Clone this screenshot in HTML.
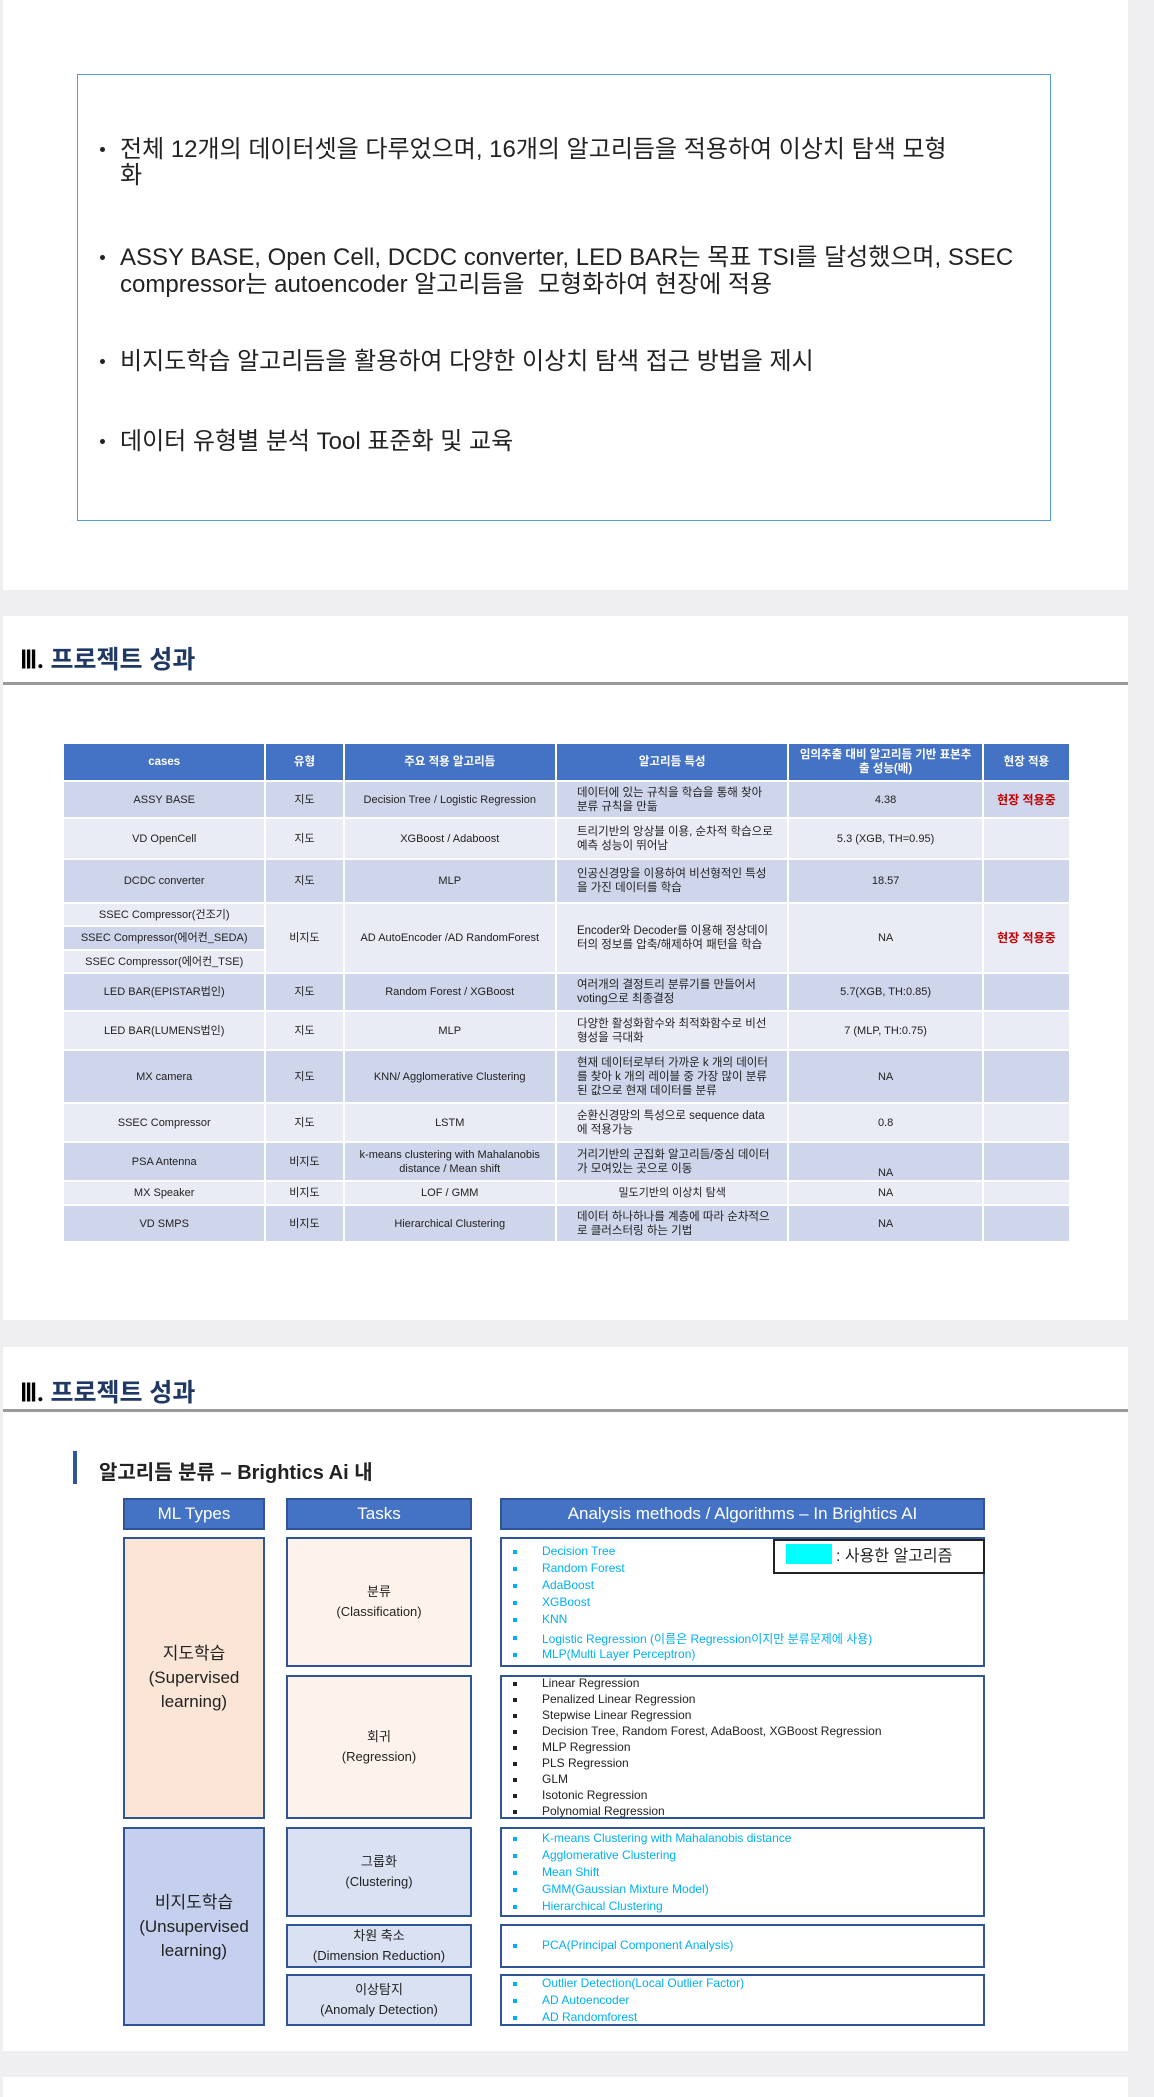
<!DOCTYPE html>
<html><head><meta charset="utf-8"><style>
*{margin:0;padding:0;box-sizing:border-box}
body{width:1154px;height:2085px;background:#efeff2;position:relative;overflow:hidden;font-family:"Liberation Sans","Noto Sans CJK KR",sans-serif;color:#222}
.card{position:absolute;left:3px;width:1125px;background:#fff}
.abs{position:absolute}
.title{position:absolute;left:17px;font-size:25px;font-weight:bold;color:#1F3864;white-space:nowrap}
.title b{color:#000;font-family:"Liberation Serif",serif}
.rule{position:absolute;left:0;width:1125px;height:3px;background:#9a9a9a}
.bl{position:absolute;left:99px;font-size:24px;white-space:nowrap;color:#222;line-height:26px}
table{position:absolute;left:62px;top:742px;border-collapse:separate;border-spacing:2px;table-layout:fixed;width:1009px;font-size:11px;text-align:center}
td,th{padding:0 3px;line-height:14px}
th{background:#4472C4;color:#fff;font-weight:bold;font-size:11.5px;padding:0 8px}
.d{background:#CFD5EA}.l{background:#E9EBF5}
td.t{text-align:left;font-size:11.5px;padding:0 14px 0 20px}
.red{color:#C00000;font-weight:bold;font-size:12px}
.hd{position:absolute;background:#4472C4;border:2px solid #2F5597;color:#fff;font-size:17px;text-align:center;line-height:28px;top:1498px;height:32px}
.bx{position:absolute;border:2px solid #2F5597;text-align:center;display:flex;flex-direction:column;justify-content:center;font-size:13px;line-height:20px}
.li{position:absolute;left:513px;font-size:12px;white-space:nowrap}
.li i{position:absolute;left:0;width:4px;height:4px;background:currentColor;top:6px}
.li s{text-decoration:none;position:absolute;left:29px}
.c{color:#00B0F0}.k{color:#222}
</style></head><body>
<div class="card" style="top:0;height:590px"></div>
<div class="abs" style="left:77px;top:74px;width:974px;height:447px;border:1.5px solid #5B9BD5"></div>
<div class="bl" style="top:137px;left:120px">전체 12개의 데이터셋을 다루었으며, 16개의 알고리듬을 적용하여 이상치 탐색 모형</div>
<div class="bl" style="top:163px;left:120px">화</div>
<div class="abs" style="left:100px;top:147px;width:5px;height:5px;border-radius:50%;background:#222"></div>
<div class="bl" style="top:245px;left:120px">ASSY BASE, Open Cell, DCDC converter, LED BAR는 목표 TSI를 달성했으며, SSEC</div>
<div class="bl" style="top:272px;left:120px">compressor는 autoencoder 알고리듬을 &nbsp;모형화하여 현장에 적용</div>
<div class="abs" style="left:100px;top:255px;width:5px;height:5px;border-radius:50%;background:#222"></div>
<div class="bl" style="top:349px;left:120px">비지도학습 알고리듬을 활용하여 다양한 이상치 탐색 접근 방법을 제시</div>
<div class="abs" style="left:100px;top:359px;width:5px;height:5px;border-radius:50%;background:#222"></div>
<div class="bl" style="top:429px;left:120px">데이터 유형별 분석 Tool 표준화 및 교육</div>
<div class="abs" style="left:100px;top:439px;width:5px;height:5px;border-radius:50%;background:#222"></div>

<div class="card" style="top:616px;height:704px">
<div class="title" style="top:24px"><b>Ⅲ.</b> 프로젝트 성과</div>
<div class="rule" style="top:66px"></div>
</div>
<table>
<colgroup><col style="width:200px"><col style="width:76px"><col style="width:210px"><col style="width:230px"><col style="width:192px"><col style="width:85px"></colgroup>
<tr style="height:36px"><th>cases</th><th>유형</th><th>주요 적용 알고리듬</th><th>알고리듬 특성</th><th>임의추출 대비 알고리듬 기반 표본추출 성능(배)</th><th>현장 적용</th></tr>
<tr style="height:35px" class="d"><td>ASSY BASE</td><td>지도</td><td>Decision Tree / Logistic Regression</td><td class="t">데이터에 있는 규칙을 학습을 통해 찾아 분류 규칙을 만듦</td><td>4.38</td><td class="red">현장 적용중</td></tr>
<tr style="height:39px" class="l"><td>VD OpenCell</td><td>지도</td><td>XGBoost / Adaboost</td><td class="t">트리기반의 앙상블 이용, 순차적 학습으로 예측 성능이 뛰어남</td><td>5.3 (XGB, TH=0.95)</td><td></td></tr>
<tr style="height:42px" class="d"><td>DCDC converter</td><td>지도</td><td>MLP</td><td class="t">인공신경망을 이용하여 비선형적인 특성을 가진 데이터를 학습</td><td>18.57</td><td></td></tr>
<tr style="height:21px"><td class="l">SSEC Compressor(건조기)</td><td class="l" rowspan="3">비지도</td><td class="l" rowspan="3">AD AutoEncoder /AD RandomForest</td><td class="l t" rowspan="3">Encoder와 Decoder를 이용해 정상데이터의 정보를 압축/해제하여 패턴을 학습</td><td class="l" rowspan="3">NA</td><td class="l red" rowspan="3">현장 적용중</td></tr>
<tr style="height:22px"><td class="d">SSEC Compressor(에어컨_SEDA)</td></tr>
<tr style="height:21px"><td class="l">SSEC Compressor(에어컨_TSE)</td></tr>
<tr style="height:36px" class="d"><td>LED BAR(EPISTAR법인)</td><td>지도</td><td>Random Forest / XGBoost</td><td class="t">여러개의 결정트리 분류기를 만들어서 voting으로 최종결정</td><td>5.7(XGB, TH:0.85)</td><td></td></tr>
<tr style="height:37px" class="l"><td>LED BAR(LUMENS법인)</td><td>지도</td><td>MLP</td><td class="t">다양한 활성화함수와 최적화함수로 비선형성을 극대화</td><td>7 (MLP, TH:0.75)</td><td></td></tr>
<tr style="height:51px" class="d"><td>MX camera</td><td>지도</td><td>KNN/ Agglomerative Clustering</td><td class="t">현재 데이터로부터 가까운 k 개의 데이터를 찾아 k 개의 레이블 중 가장 많이 분류된 값으로 현재 데이터를 분류</td><td>NA</td><td></td></tr>
<tr style="height:37px" class="l"><td>SSEC Compressor</td><td>지도</td><td>LSTM</td><td class="t">순환신경망의 특성으로 sequence data에 적용가능</td><td>0.8</td><td></td></tr>
<tr style="height:37px" class="d"><td>PSA Antenna</td><td>비지도</td><td>k-means clustering with Mahalanobis distance / Mean shift</td><td class="t">거리기반의 군집화 알고리듬/중심 데이터가 모여있는 곳으로 이동</td><td style="vertical-align:bottom">NA</td><td></td></tr>
<tr style="height:22px" class="l"><td>MX Speaker</td><td>비지도</td><td>LOF / GMM</td><td>밀도기반의 이상치 탐색</td><td>NA</td><td></td></tr>
<tr style="height:35px" class="d"><td>VD SMPS</td><td>비지도</td><td>Hierarchical Clustering</td><td class="t">데이터 하나하나를 계층에 따라 순차적으로 클러스터링 하는 기법</td><td>NA</td><td></td></tr>
</table>

<div class="card" style="top:1347px;height:704px">
<div class="title" style="top:26px"><b>Ⅲ.</b> 프로젝트 성과</div>
<div class="rule" style="top:62px"></div>
</div>
<div class="abs" style="left:73px;top:1451px;width:4px;height:33px;background:#2F5597"></div>
<div class="abs" style="left:99px;top:1456px;font-size:20px;font-weight:bold;white-space:nowrap">알고리듬 분류 – Brightics Ai 내</div>

<div class="hd" style="left:123px;width:142px">ML Types</div>
<div class="hd" style="left:286px;width:186px">Tasks</div>
<div class="hd" style="left:500px;width:485px">Analysis methods / Algorithms – In Brightics AI</div>

<div class="bx" style="left:123px;top:1537px;width:142px;height:282px;background:#FBE5D6;font-size:17px;line-height:24px">지도학습<br>(Supervised<br>learning)</div>
<div class="bx" style="left:123px;top:1827px;width:142px;height:199px;background:#C5D0EE;font-size:17px;line-height:24px">비지도학습<br>(Unsupervised<br>learning)</div>
<div class="bx" style="left:286px;top:1537px;width:186px;height:130px;background:#FEF3EC">분류<br>(Classification)</div>
<div class="bx" style="left:286px;top:1675px;width:186px;height:144px;background:#FEF3EC">회귀<br>(Regression)</div>
<div class="bx" style="left:286px;top:1827px;width:186px;height:90px;background:#DAE1F3">그룹화<br>(Clustering)</div>
<div class="bx" style="left:286px;top:1924px;width:186px;height:44px;background:#DAE1F3">차원 축소<br>(Dimension Reduction)</div>
<div class="bx" style="left:286px;top:1974px;width:186px;height:52px;background:#DAE1F3">이상탐지<br>(Anomaly Detection)</div>

<div class="bx" style="left:500px;top:1537px;width:485px;height:130px"></div>
<div class="bx" style="left:500px;top:1675px;width:485px;height:144px"></div>
<div class="bx" style="left:500px;top:1827px;width:485px;height:90px"></div>
<div class="bx" style="left:500px;top:1924px;width:485px;height:44px"></div>
<div class="bx" style="left:500px;top:1974px;width:485px;height:52px"></div>
<div class="abs" style="left:773px;top:1539px;width:212px;height:35px;border:2px solid #222;background:#fff"></div>
<div class="abs" style="left:786px;top:1544px;width:46px;height:20px;background:#00FFFF"></div>
<div class="abs" style="left:836px;top:1542px;font-size:16px;white-space:nowrap">: 사용한 알고리즘</div>

<div class="li c" style="top:1544px"><i></i><s>Decision Tree</s></div>
<div class="li c" style="top:1561px"><i></i><s>Random Forest</s></div>
<div class="li c" style="top:1578px"><i></i><s>AdaBoost</s></div>
<div class="li c" style="top:1595px"><i></i><s>XGBoost</s></div>
<div class="li c" style="top:1612px"><i></i><s>KNN</s></div>
<div class="li c" style="top:1630px"><i></i><s>Logistic Regression (이름은 Regression이지만 분류문제에 사용)</s></div>
<div class="li c" style="top:1647px"><i></i><s>MLP(Multi Layer Perceptron)</s></div>

<div class="li k" style="top:1676px"><i></i><s>Linear Regression</s></div>
<div class="li k" style="top:1692px"><i></i><s>Penalized Linear Regression</s></div>
<div class="li k" style="top:1708px"><i></i><s>Stepwise Linear Regression</s></div>
<div class="li k" style="top:1724px"><i></i><s>Decision Tree, Random Forest, AdaBoost, XGBoost Regression</s></div>
<div class="li k" style="top:1740px"><i></i><s>MLP Regression</s></div>
<div class="li k" style="top:1756px"><i></i><s>PLS Regression</s></div>
<div class="li k" style="top:1772px"><i></i><s>GLM</s></div>
<div class="li k" style="top:1788px"><i></i><s>Isotonic Regression</s></div>
<div class="li k" style="top:1804px"><i></i><s>Polynomial Regression</s></div>

<div class="li c" style="top:1831px"><i></i><s>K-means Clustering with Mahalanobis distance</s></div>
<div class="li c" style="top:1848px"><i></i><s>Agglomerative Clustering</s></div>
<div class="li c" style="top:1865px"><i></i><s>Mean Shift</s></div>
<div class="li c" style="top:1882px"><i></i><s>GMM(Gaussian Mixture Model)</s></div>
<div class="li c" style="top:1899px"><i></i><s>Hierarchical Clustering</s></div>

<div class="li c" style="top:1938px"><i></i><s>PCA(Principal Component Analysis)</s></div>

<div class="li c" style="top:1976px"><i></i><s>Outlier Detection(Local Outlier Factor)</s></div>
<div class="li c" style="top:1993px"><i></i><s>AD Autoencoder</s></div>
<div class="li c" style="top:2010px"><i></i><s>AD Randomforest</s></div>

<div class="card" style="top:2077px;height:20px"></div>
</body></html>
